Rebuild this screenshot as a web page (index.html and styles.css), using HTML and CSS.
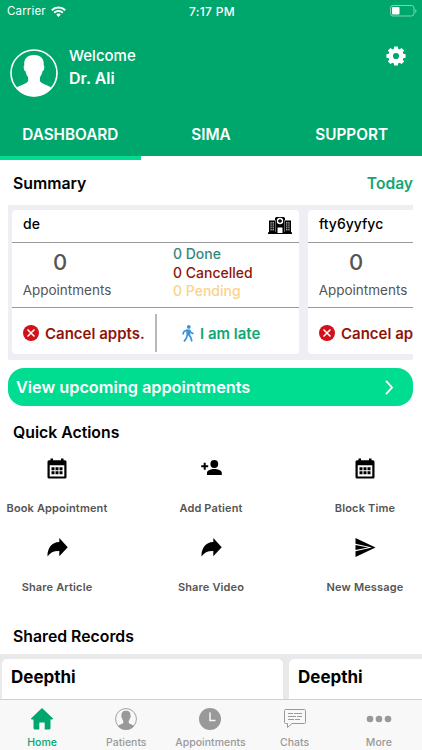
FILE: index.html
```html
<!DOCTYPE html>
<html lang="en">
<head>
<meta charset="UTF-8">
<meta name="viewport" content="width=device-width, initial-scale=1.0">
<title>Dashboard</title>
<link rel="stylesheet" href="styles.css">
</head>
<body>
<!-- shared icons -->
<svg class="sprite" width="0" height="0">
    <symbol id="calendar" viewBox="0 0 20 21">
        <path fill-rule="evenodd" d="M3.500 0.500h2.500v1.700h8V0.500h2.500v1.700h1.500a1.500 1.500 0 0 1 1.500 1.500v15.300a1.500 1.500 0 0 1-1.500 1.500H2A1.500 1.500 0 0 1 .5 19V3.700A1.500 1.500 0 0 1 2 2.200h1.500zM2.700 7.200v11.200h14.600V7.200z"/>
        <path d="M4.500 9.200h3v3h-3zM8.500 9.200h3v3h-3zM12.500 9.200h3v3h-3zM4.500 13.300h3v3h-3zM8.500 13.300h3v3h-3zM12.500 13.300h3v3h-3z"/>
    </symbol>
    <symbol id="share" viewBox="0 0 21 19">
        <path d="M12.300 0L20.700 9.300 12.300 18.300V13C7 12.700 3.500 14.400 .5 18.500 .2 10.500 4.500 4.200 12.300 4z"/>
    </symbol>
    <symbol id="cross" viewBox="0 0 16 16">
        <circle cx="8" cy="8" r="8" fill="#d0111b"/>
        <path d="M4.500 4.500l7 7M11.500 4.500l-7 7" stroke="#fff" stroke-width="1.500"/>
    </symbol>
    <symbol id="person" viewBox="0 0 48 48">
        <path d="M24 6c7.500 0 10.300 4.500 9.700 10.500.7.300.8 1.500.4 3.200-.3 1.500-.8 2.300-1.600 2.500-.5 3-1.700 4.900-2.600 6.100v3.700c1.500 3.300 8.100 3.600 11.600 7C37.500 44.500 31 47.500 24 47.500S10.500 44.500 6.500 39c3.500-3.400 10.100-3.700 11.600-7v-3.700c-.9-1.200-2.100-3.100-2.600-6.100-.8-.2-1.300-1-1.600-2.500-.4-1.700-.3-2.900.4-3.200C13.700 10.500 16.500 6 24 6z"/>
    </symbol>
</svg>

<header class="header">
    <div class="status-bar">
        <span class="carrier">Carrier
            <svg width="15" height="11" viewBox="0 0 15 11" fill="none" stroke="#fff" stroke-width="2">
                <path d="M.8 4.200a9.500 9.500 0 0 1 13.400 0M3.200 6.700a6.100 6.100 0 0 1 8.600 0"/>
                <path d="M7.500 11L5.200 8.600a3.300 3.300 0 0 1 4.600 0z" fill="#fff" stroke="none"/>
            </svg>
        </span>
        <span class="time">7:17 PM</span>
        <svg class="battery" width="27" height="12" viewBox="0 0 27 12">
            <rect x=".5" y=".5" width="23.500" height="10.500" rx="2.500" fill="none" stroke="#7fd3b5"/>
            <rect x="2" y="2" width="7.500" height="7.500" rx="1" fill="#fff"/>
            <path d="M25.300 4v4c1.500-.7 1.500-3.300 0-4z" fill="#7fd3b5"/>
        </svg>
    </div>
    <div class="profile">
        <svg class="avatar" width="48" height="48" viewBox="0 0 48 48">
            <circle cx="24" cy="24" r="23" fill="none" stroke="#fff" stroke-width="1.600"/>
            <use href="#person" fill="#fff"/>
        </svg>
        <div class="who">
            <div class="welcome">Welcome</div>
            <div class="doctor">Dr. Ali</div>
        </div>
        <svg class="gear" width="20" height="20" viewBox="0 0 20 20">
            <path fill="#fff" fill-rule="evenodd" d="M8.200.5h3.600l.5 2.400 1.200.5 2.100-1.400 2.500 2.500-1.400 2.100.5 1.200 2.400.5v3.500l-2.400.5-.5 1.200 1.400 2.100-2.500 2.500-2.100-1.400-1.200.5-.5 2.400H8.200l-.5-2.400-1.200-.5-2.100 1.400-2.500-2.500 1.400-2.100-.5-1.200-2.400-.5V8.300l2.400-.5.5-1.200L1.900 4.500 4.400 2l2.100 1.400 1.200-.5zM10 6.900a3.100 3.100 0 1 0 0 6.200 3.100 3.100 0 0 0 0-6.200z"/>
        </svg>
    </div>
    <nav class="tabs">
        <span>DASHBOARD</span>
        <span>SIMA</span>
        <span>SUPPORT</span>
    </nav>
</header>
<div class="indicator"></div>

<main>
    <div class="summary-head">
        <h2>Summary</h2>
        <span class="today">Today</span>
    </div>
    <div class="summary">
        <section class="card">
            <div class="card-title">
                <span>de</span>
                <svg width="24" height="17" viewBox="0 0 24 17">
                    <path d="M0 15.200h1V3.500h6V1.500Q7 0 8.500 0h7Q17 0 17 1.500v2h6v11.700h1V17H0z"/>
                    <path d="M2.500 5h3.500v8.500H2.500zM18 5h3.500v8.500H18z" fill="#aaa"/>
                    <path d="M2.500 7h3.500M2.500 9.200h3.500M2.500 11.400h3.500M4.200 5v9M18 7h3.500M18 9.200h3.500M18 11.400h3.500M19.800 5v9" stroke="#000" stroke-width=".8"/>
                    <path d="M7.500 3v12M16.500 3v12" stroke="#aaa" stroke-width=".6"/>
                    <circle cx="12" cy="4" r="3.200" fill="#fff"/>
                    <path d="M12 2v4M10 4h4" stroke="#000" stroke-width="1.300"/>
                    <path d="M9.500 10.500h5V16h-5z" fill="#fff"/>
                </svg>
            </div>
            <div class="card-body">
                <div class="count"><b>0</b><span>Appointments</span></div>
                <div class="states">
                    <span class="done">0 Done</span>
                    <span class="cancelled">0 Cancelled</span>
                    <span class="pending">0 Pending</span>
                </div>
            </div>
            <div class="card-actions">
                <div class="cancel"><svg width="16" height="16"><use href="#cross"/></svg><span>Cancel appts.</span></div>
                <div class="late">
                    <svg width="12" height="17" viewBox="0 0 12 17" fill="none" stroke="#3b93d8" stroke-width="1.700" stroke-linejoin="round">
                        <circle cx="6.800" cy="1.900" r="1.900" fill="#3b93d8" stroke="none"/>
                        <path d="M4.200 4.500h4L8.300 10.500H4.500z" fill="#3b93d8" stroke="none"/>
                        <path d="M5.500 5L2 6.500.8 9.500M7.500 5.200L9 7.500l2.500 1.300M5.400 10l-1 3-2.400 3.500M7 10l2 2.800.8 3.700"/>
                    </svg>
                    <span>I am late</span>
                </div>
            </div>
        </section>
        <section class="card">
            <div class="card-title"><span>fty6yyfyc</span></div>
            <div class="card-body">
                <div class="count"><b>0</b><span>Appointments</span></div>
            </div>
            <div class="card-actions">
                <div class="cancel"><svg width="16" height="16"><use href="#cross"/></svg><span>Cancel appts.</span></div>
            </div>
        </section>
    </div>

    <div class="upcoming">
        <span>View upcoming appointments</span>
        <svg width="9" height="15" viewBox="0 0 9 15" fill="none" stroke="#fff" stroke-width="1.800"><path d="M1 .8l6 6.700-6 6.700"/></svg>
    </div>

    <h2 class="quick-title">Quick Actions</h2>
    <div class="actions">
        <div class="action"><svg width="20" height="21"><use href="#calendar"/></svg><span>Book Appointment</span></div>
        <div class="action">
            <svg width="21" height="21" viewBox="0 0 21 21">
                <circle cx="13.300" cy="6" r="3.900"/>
                <path d="M6 17v-2c0-2.800 4.300-3.900 7.300-3.900s7.500 1.100 7.500 3.900v2zM2.700 4.800h2v2.500h2.500v2H4.700v2.500h-2V9.300H.2v-2h2.500z"/>
            </svg>
            <span>Add Patient</span>
        </div>
        <div class="action"><svg width="20" height="21"><use href="#calendar"/></svg><span>Block Time</span></div>
        <div class="action"><svg width="21" height="19"><use href="#share"/></svg><span>Share Article</span></div>
        <div class="action"><svg width="21" height="19"><use href="#share"/></svg><span>Share Video</span></div>
        <div class="action">
            <svg width="21" height="19" viewBox="0 0 21 19">
                <path d="M.5 0L20.500 9.500 .5 19V13.200L17 9.500.5 5.800z"/>
                <path d="M.5 7L13 9.500.5 12z"/>
            </svg>
            <span>New Message</span>
        </div>
    </div>

    <h2 class="records-title">Shared Records</h2>
    <div class="records">
        <div class="record">Deepthi</div>
        <div class="record">Deepthi</div>
    </div>
</main>

<footer class="tab-bar">
    <div class="tab active">
        <svg width="22" height="22" viewBox="0 0 22 22"><path fill="#00a76d" d="M11 0l11 10.500c.2.700-.2 1-.8 1h-1.700V20q0 1.500-1.500 1.500h-4.300v-7H8.300v7H4Q2.500 21.500 2.500 20v-8.500H.8c-.6 0-1-.3-.8-1z"/></svg>
        <span>Home</span>
    </div>
    <div class="tab">
        <svg width="22" height="22" viewBox="0 0 48 48"><circle cx="24" cy="24" r="22.800" fill="none" stroke="#999" stroke-width="2"/><use href="#person" fill="#999"/></svg>
        <span>Patients</span>
    </div>
    <div class="tab">
        <svg width="22" height="22" viewBox="0 0 22 22"><circle cx="11" cy="11" r="11" fill="#999"/><path d="M11 4.500V12.500h5.500" fill="none" stroke="#f8f8f8" stroke-width="1.500"/></svg>
        <span>Appointments</span>
    </div>
    <div class="tab">
        <svg width="22" height="22" viewBox="0 0 22 22" fill="none" stroke="#999"><path d="M1.500 1.500h19q1 0 1 1v12q0 1-1 1H8l-4.500 4v-4h-2q-1 0-1-1v-12q0-1 1-1z"/><path d="M4 5.500h5M10 5.500h8M4 8.500h8M13 8.500h5M4 11.500h6M11 11.500h5"/></svg>
        <span>Chats</span>
    </div>
    <div class="tab">
        <svg width="26" height="22" viewBox="0 0 26 22" fill="#999"><circle cx="4" cy="11" r="3.300"/><circle cx="13" cy="11" r="3.300"/><circle cx="22" cy="11" r="3.300"/></svg>
        <span>More</span>
    </div>
</footer>
</body>
</html>
```
FILE: styles.css
```css
* {
    box-sizing: border-box;
}

body {
    font-family: Inter, "Liberation Sans", sans-serif;
    background-color: #fff;
    color: #000;
    margin: 0;
    height: 750px;
    display: flex;
    flex-direction: column;
    overflow: hidden;
    white-space: nowrap;
}

svg {
    display: block;
    flex-shrink: 0;
}

.sprite {
    position: absolute;
}

.header {
    height: 156px;
    flex-shrink: 0;
    background-color: #00a76d;
    color: #fff;
}

.status-bar {
    display: grid;
    grid-template-columns: 1fr auto 1fr;
    align-items: center;
    height: 22px;
    padding: 0 5px 0 7px;
    font-size: 11.5px;
}

.carrier {
    display: flex;
    align-items: center;
    gap: 5px;
    letter-spacing: 0.15px;
}

.time {
    font-size: 12px;
    font-weight: 500;
    letter-spacing: 0.3px;
}

.battery {
    justify-self: end;
}

.profile {
    display: flex;
    height: 92px;
    padding: 27px 16px 0 10px;
}

.who {
    flex: 1;
    margin: -5px 0 0 11px;
    font-size: 15px;
    line-height: 23px;
}

.welcome {
    font-weight: 500;
}

.doctor {
    font-size: 16px;
    font-weight: 600;
}

.gear {
    margin-top: -3px;
}

.tabs {
    display: grid;
    grid-template-columns: repeat(3, 1fr);
    line-height: 42px;
    text-align: center;
    font-size: 15.3px;
    font-weight: 600;
}

.indicator {
    width: 141px;
    height: 4px;
    flex-shrink: 0;
    background-color: #00dc90;
}

main {
    flex: 1;
    overflow: hidden;
}

h2 {
    margin: 0;
    font-size: 15.8px;
    font-weight: 600;
}

.summary-head {
    display: flex;
    justify-content: space-between;
    height: 45px;
    padding: 0 9px 0 13px;
    line-height: 48px;
}

.today {
    font-size: 15.6px;
    font-weight: 600;
    color: #12a672;
}

.summary {
    display: flex;
    gap: 9px;
    height: 155px;
    margin: 0 9px 0 8px;
    padding: 5px 0 6px 4px;
    background-color: #efeef5;
    overflow: hidden;
}

.card {
    flex: 0 0 287px;
    border-radius: 4px;
    background-color: #fff;
}

.card-title {
    display: flex;
    justify-content: space-between;
    height: 33px;
    padding: 7px 7px 0 11px;
    border-bottom: 1px solid #999;
    font-size: 14px;
    font-weight: 500;
    line-height: 14px;
}

.card-body {
    display: flex;
    height: 65px;
    border-bottom: 1px solid #999;
}

.count {
    width: 110px;
    text-align: center;
    font-size: 13.5px;
    line-height: 18px;
    color: #555;
}

.count b {
    display: block;
    padding-right: 14px;
    font-size: 22px;
    font-weight: 500;
    line-height: 38px;
}

.states {
    display: flex;
    flex-direction: column;
    height: 56px;
    margin-left: 51px;
    padding-top: 2px;
    font-size: 14px;
    font-weight: 500;
    line-height: 18.5px;
    overflow: hidden;
}

.done {
    color: #35877f;
}

.cancelled {
    color: #8f1508;
}

.pending {
    color: #fbd389;
}

.card-actions {
    display: flex;
    align-items: center;
    height: 46px;
    padding-top: 4px;
    font-size: 15px;
    font-weight: 600;
}

.cancel, .late {
    display: flex;
    align-items: center;
    gap: 6px;
}

.cancel {
    width: 145px;
    height: 38px;
    padding-left: 11px;
    border-right: 2px solid #b8b8b8;
    color: #8f1508;
}

.late {
    padding-left: 25px;
    color: #12a672;
}

.upcoming {
    display: flex;
    justify-content: space-between;
    align-items: center;
    height: 38px;
    margin: 8px 9px 0 8px;
    padding: 0 19px 0 8px;
    border-radius: 16px;
    background-color: #00dc90;
    color: #fff;
    font-size: 16.3px;
    font-weight: 600;
}

.quick-title {
    height: 52px;
    margin-left: 13px;
    line-height: 54px;
}

.actions {
    display: grid;
    grid-template-columns: 114px 194px 114px;
    grid-auto-rows: 78.5px;
    font-size: 11px;
    font-weight: 600;
    letter-spacing: 0.15px;
    color: #555;
}

.action {
    display: flex;
    flex-direction: column;
    align-items: center;
}

.action svg {
    height: 21px;
    margin-bottom: 22px;
    fill: #000;
}

.records-title {
    height: 39px;
    margin-left: 13px;
    line-height: 43px;
}

.records {
    display: flex;
    gap: 6px;
    padding: 5px 0 0 2px;
    background-color: #e9e9e9;
}

.record {
    flex: 0 0 281px;
    height: 60px;
    padding-left: 9px;
    border-radius: 5px;
    background-color: #fff;
    font-size: 17px;
    font-weight: 700;
    line-height: 37px;
}

.tab-bar {
    display: grid;
    grid-template-columns: repeat(5, 84.2px);
    height: 51px;
    flex-shrink: 0;
    padding-top: 8px;
    border-top: 1px solid #d0d0d0;
    background-color: #f8f8f8;
    color: #999;
    font-size: 10.5px;
    font-weight: 500;
}

.tab {
    display: flex;
    flex-direction: column;
    align-items: center;
    gap: 6px;
}

.active {
    color: #00a76d;
}
```
